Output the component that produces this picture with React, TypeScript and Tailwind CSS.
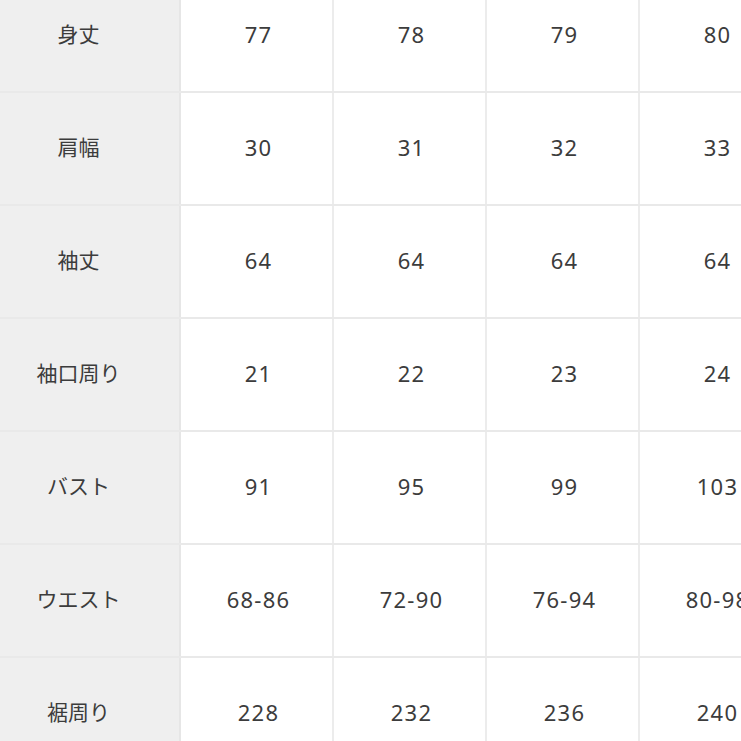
import React from "react";

const rows: [string, string[]][] = [
  ["身丈", ["77", "78", "79", "80"]],
  ["肩幅", ["30", "31", "32", "33"]],
  ["袖丈", ["64", "64", "64", "64"]],
  ["袖口周り", ["21", "22", "23", "24"]],
  ["バスト", ["91", "95", "99", "103"]],
  ["ウエスト", ["68-86", "72-90", "76-94", "80-98"]],
  ["裾周り", ["228", "232", "236", "240"]],
];

export default function App() {
  return (
    <div
      className="w-[741px] h-[741px] overflow-hidden bg-white text-[#3c3c3c]"
      style={{ fontFamily: '"Noto Sans", "Noto Sans CJK JP", sans-serif' }}
    >
      <div className="-mt-[20px] flex flex-col w-[800px]">
        {rows.map(([label, vals]) => (
          <div key={label} className="flex h-[113px] border-b-2 border-[#e9e9e9]">
            <div className="w-[181px] shrink-0 bg-[#efefef] border-r-2 border-[#e6e6e6] flex items-center justify-center pr-[22px] pb-[2px] text-[21px]">
              {label}
            </div>
            {vals.map((v, i) => (
              <div
                key={i}
                className="w-[153px] shrink-0 border-r-2 border-[#ececec] flex items-center justify-center pl-[4px] pb-[2px] text-[22px] tracking-[1.2px]"
              >
                {v}
              </div>
            ))}
          </div>
        ))}
      </div>
    </div>
  );
}
